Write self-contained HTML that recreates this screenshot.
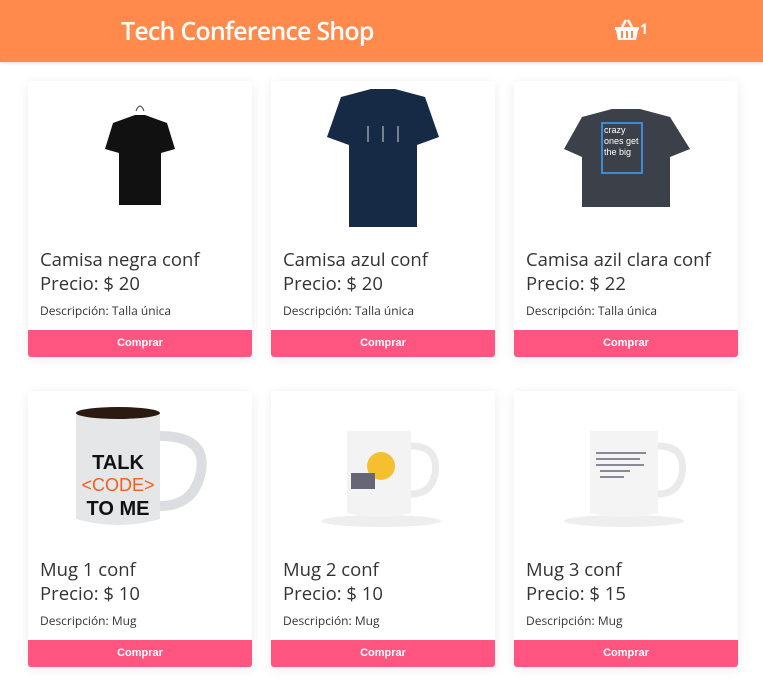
<!DOCTYPE html>
<html><head><meta charset="utf-8"><style>
*{margin:0;padding:0;box-sizing:border-box}
body{width:763px;height:679px;overflow:hidden;background:#fff;font-family:"Open Sans","Liberation Sans",sans-serif;position:relative}
.hdr{position:absolute;left:0;top:0;width:763px;height:62px;background:#ff8a4c;box-shadow:0 1px 3px rgba(0,0,0,.15)}
.hdr h1{position:absolute;left:121px;top:14px;color:#fff;font-size:25px;font-weight:600;letter-spacing:-0.8px}
.cart{position:absolute;left:614px;top:18px;color:#fff;font-size:14px;font-weight:bold}
.card{position:absolute;width:224px;height:276px;background:#fff;border-radius:3px;box-shadow:0 2px 12px rgba(0,0,0,.08)}
.card svg.img{position:absolute;left:0;top:0}
.t{position:absolute;left:12px;top:166px;font-size:18.5px;color:#333;font-weight:500}
.p{position:absolute;left:12px;top:190px;font-size:18.5px;color:#333;font-weight:500}
.d{position:absolute;left:12px;top:221px;font-size:12px;color:#333}
.b{position:absolute;left:0;bottom:0;width:224px;height:27px;background:#ff5580;color:#fff;font-size:11px;font-weight:bold;text-align:center;line-height:27px;border-radius:0 0 3px 3px;font-family:"Liberation Sans",sans-serif}
</style></head><body>
<div class="hdr"><h1>Tech Conference Shop</h1>
<div class="cart"><svg width="26" height="24" viewBox="0 0 26 24" style="vertical-align:middle"><path d="M8 9 L12 2 M18 9 L14 2" stroke="#fff" stroke-width="2.5" fill="none"/><path d="M1 9h24v3h-1l-2 10H4L2 12H1z" fill="#fff"/><path d="M8 13v7M13 13v7M18 13v7" stroke="#ff8a4c" stroke-width="2"/></svg>1</div></div>

<div class="card" style="left:28px;top:81px">
<svg class="img" width="224" height="160"><path d="M85 42 l22-8 h10 l22 8 l8 26 -14 4 v52 h-42 v-52 l-14 -4z" fill="#111"/><path d="M108 30 q4-10 8 0" stroke="#333" fill="none"/></svg>
<div class="t">Camisa negra conf</div><div class="p">Precio: $ 20</div><div class="d">Descripción: Talla única</div><div class="b">Comprar</div></div>
<div class="card" style="left:271px;top:81px">
<svg class="img" width="224" height="160"><path d="M70 16 l30-8 h24 l30 8 l14 40 -22 8 v82 h-68 v-82 l-22-8z" fill="#162a45"/><g stroke="#cfd6e0" stroke-width="1" fill="none"><path d="M97 45v16M112 45v16M127 45v16"/></g></svg>
<div class="t">Camisa azul conf</div><div class="p">Precio: $ 20</div><div class="d">Descripción: Talla única</div><div class="b">Comprar</div></div>
<div class="card" style="left:514px;top:81px">
<svg class="img" width="224" height="160"><path d="M68 36 l30-8 h28 l30 8 l20 32 -20 8 v50 h-88 v-50 l-18-8z" fill="#3c4048"/><rect x="88" y="42" width="40" height="50" fill="none" stroke="#3a8bd8" stroke-width="2"/><text x="90" y="52" fill="#fff" font-size="9" font-family="Liberation Sans">crazy</text><text x="90" y="63" fill="#fff" font-size="9" font-family="Liberation Sans">ones get</text><text x="90" y="74" fill="#fff" font-size="9" font-family="Liberation Sans">the big</text></svg>
<div class="t">Camisa azil clara conf</div><div class="p">Precio: $ 22</div><div class="d">Descripción: Talla única</div><div class="b">Comprar</div></div>

<div class="card" style="left:28px;top:391px">
<svg class="img" width="224" height="160"><path d="M48 22 h84 v106 q-42 12 -84 0z" fill="#e4e6e8"/><ellipse cx="90" cy="22" rx="42" ry="6" fill="#2a1a10"/><path d="M132 45 q50 0 40 40 q-8 30 -40 30" stroke="#dcdde0" stroke-width="10" fill="none"/><text x="90" y="78" text-anchor="middle" font-size="20" font-weight="bold" fill="#111" font-family="Liberation Sans">TALK</text><text x="90" y="100" text-anchor="middle" font-size="18" fill="#f06020" font-family="Liberation Sans">&lt;CODE&gt;</text><text x="90" y="124" text-anchor="middle" font-size="20" font-weight="bold" fill="#111" font-family="Liberation Sans">TO ME</text></svg>
<div class="t">Mug 1 conf</div><div class="p">Precio: $ 10</div><div class="d">Descripción: Mug</div><div class="b">Comprar</div></div>
<div class="card" style="left:271px;top:391px">
<svg class="img" width="224" height="160"><ellipse cx="110" cy="130" rx="60" ry="6" fill="#eee"/><path d="M76 40 h64 v82 q-32 8 -64 0z" fill="#f3f3f3"/><path d="M140 55 q28 0 24 28 q-4 20 -24 20" stroke="#eaeaea" stroke-width="7" fill="none"/><circle cx="110" cy="75" r="14" fill="#f5c030"/><rect x="80" y="82" width="24" height="16" fill="#667"/></svg>
<div class="t">Mug 2 conf</div><div class="p">Precio: $ 10</div><div class="d">Descripción: Mug</div><div class="b">Comprar</div></div>
<div class="card" style="left:514px;top:391px">
<svg class="img" width="224" height="160"><ellipse cx="110" cy="130" rx="60" ry="6" fill="#eee"/><path d="M76 40 h68 v82 q-34 8 -68 0z" fill="#f4f4f4"/><path d="M144 55 q28 0 24 28 q-4 20 -24 20" stroke="#eaeaea" stroke-width="7" fill="none"/><g stroke="#667" stroke-width="1.5"><path d="M82 62h50M82 68h44M82 74h48M86 80h30M86 86h24"/></g></svg>
<div class="t">Mug 3 conf</div><div class="p">Precio: $ 15</div><div class="d">Descripción: Mug</div><div class="b">Comprar</div></div>
</body></html>
